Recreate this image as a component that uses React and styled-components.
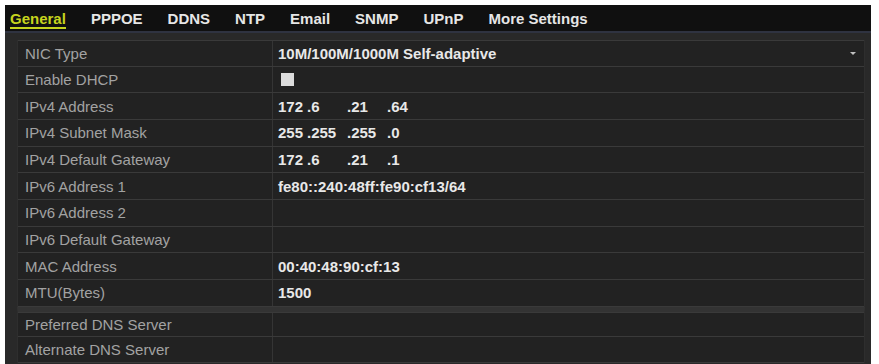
import React from 'react'
import styled, { createGlobalStyle } from 'styled-components'

const Global = createGlobalStyle`
  html, body {
    margin: 0;
    background: #fff;
    font-family: "Liberation Sans", Arial, sans-serif;
  }
  * { box-sizing: border-box; }
`

// PANEL
const Panel = styled.div`
  margin: 5px 8px 0 5px;
  height: 359px;
  background: #292929;
  overflow: hidden;
  display: flex;
  flex-direction: column;
`

const TabBar = styled.ul`
  flex-shrink: 0;
  display: flex;
  align-items: flex-start;
  gap: 25px;
  list-style: none;
  margin: 0;
  padding: 5px 0 0 5px;
  height: 28px;
  background: #101010;
  border-bottom: 2px solid #2f3341;
`

const Tab = styled.li`
  font-size: 15px;
  font-weight: 700;
  color: ${p => (p.active ? '#c6d41e' : '#e6e6e6')};
  line-height: 17px;
  border-bottom: 2px solid ${p => (p.active ? '#c6d41e' : 'transparent')};
`

const Body = styled.div`
  flex: 1;
  padding: 7px 6px 0 12px;
  display: flex;
  flex-direction: column;
`

const Group = styled.div`
  flex-shrink: 0;
  display: flex;
  flex-direction: column;
  background: #222;
  border-left: 1px solid #2e2e2e;
  border-right: 1px solid #2e2e2e;
  & + & {
    border-top: 5px solid #333;
  }
`

const Row = styled.div`
  flex-shrink: 0;
  display: grid;
  grid-template-columns: 255px 1fr;
  height: ${p => p.h}px;
  border-bottom: 1px solid #3a3a3a;
  &:first-child {
    border-top: 1px solid #3a3a3a;
  }
`

const Label = styled.div`
  display: flex;
  align-items: center;
  padding-left: 7px;
  font-size: 15px;
  color: #a2a2a2;
  border-right: 1px solid #353535;
  white-space: nowrap;
`

const Value = styled.div`
  display: flex;
  align-items: center;
  justify-content: space-between;
  padding: 0 8px 0 5px;
  font-size: 15px;
  font-weight: 700;
  color: #e8e8e8;
  white-space: pre;
`

const IpBox = styled.span`
  display: grid;
  grid-template-columns: 29px 40px 40px auto;
`

const Check = styled.span`
  width: 13px;
  height: 13px;
  background: #dcdcdc;
  margin-left: 3px;
`

const Caret = styled.span`
  width: 0;
  height: 0;
  border-left: 3.5px solid transparent;
  border-right: 3.5px solid transparent;
  border-top: 3.5px solid #c0c0c0;
`

const tabs = ['General', 'PPPOE', 'DDNS', 'NTP', 'Email', 'SNMP', 'UPnP', 'More Settings']

const main = [
  ['NIC Type', 'select', '10M/100M/1000M Self-adaptive'],
  ['Enable DHCP', 'check'],
  ['IPv4 Address', 'ip', ['172', '.6', '.21', '.64']],
  ['IPv4 Subnet Mask', 'ip', ['255', '.255', '.255', '.0']],
  ['IPv4 Default Gateway', 'ip', ['172', '.6', '.21', '.1']],
  ['IPv6 Address 1', 'text', 'fe80::240:48ff:fe90:cf13/64'],
  ['IPv6 Address 2', 'text', ''],
  ['IPv6 Default Gateway', 'text', ''],
  ['MAC Address', 'text', '00:40:48:90:cf:13'],
  ['MTU(Bytes)', 'text', '1500'],
]

const dns = [
  ['Preferred DNS Server', 'text', ''],
  ['Alternate DNS Server', 'text', ''],
]

const Field = ({ label, kind, value, h }) => (
  <Row h={h}>
    <Label>{label}</Label>
    <Value>
      {kind === 'check' && <Check />}
      {kind === 'ip' && (
        <IpBox>
          {value.map((s, i) => <span key={i}>{s}</span>)}
        </IpBox>
      )}
      {(kind === 'text' || kind === 'select') && <span>{value}</span>}
      {kind === 'select' && <Caret />}
    </Value>
  </Row>
)

export default function App() {
  return (
    <>
      <Global />
      <Panel>
        <TabBar>
          {tabs.map((t, i) => (
            <Tab key={t} active={i === 0}>{t}</Tab>
          ))}
        </TabBar>
        <Body>
          <Group>
            {main.map(([l, k, v]) => (
              <Field key={l} label={l} kind={k} value={v} h={26.67} />
            ))}
          </Group>
          <Group>
            {dns.map(([l, k, v]) => (
              <Field key={l} label={l} kind={k} value={v} h={25.5} />
            ))}
          </Group>
        </Body>
      </Panel>
    </>
  )
}
